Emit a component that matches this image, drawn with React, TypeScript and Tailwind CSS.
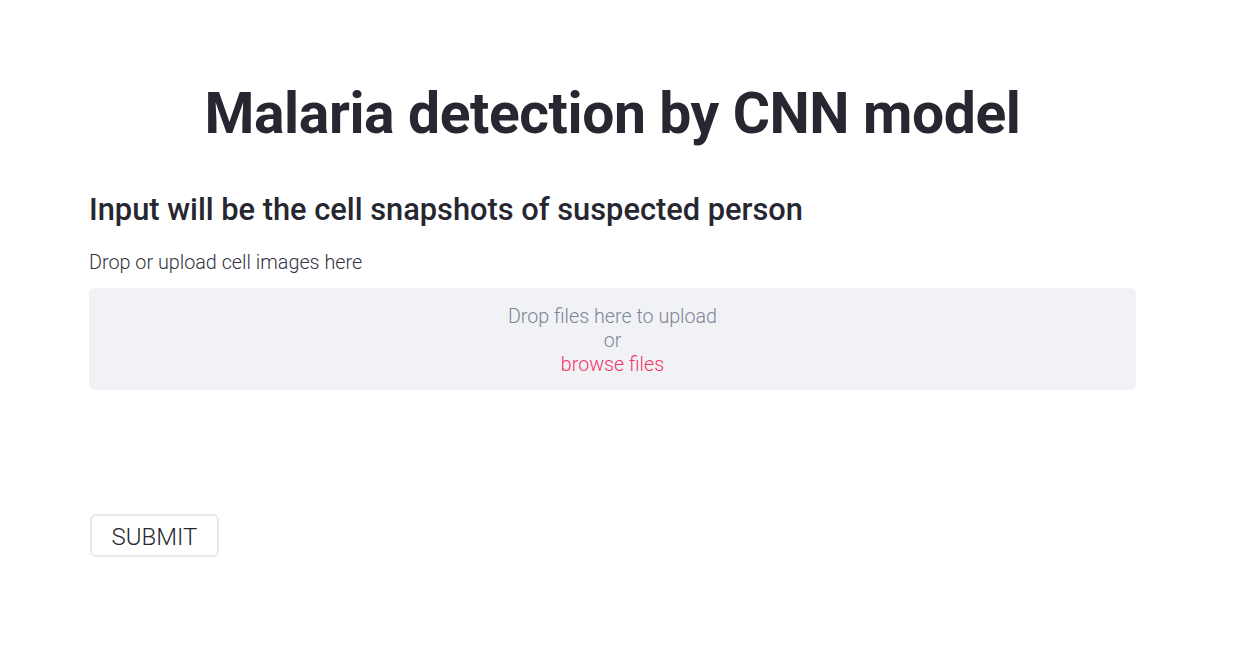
import React from 'react';

export default function App() {
  return (
    <main className="min-h-screen bg-white text-[#262730]" style={{ fontFamily: 'Roboto, "Noto Sans", sans-serif' }}>
      <div className="w-[1047px] ml-[89px] pt-[78px]">
        <h1 className="text-center text-[57px] font-bold leading-[72px] tracking-[-0.4px]">Malaria detection by CNN model</h1>
        <h3 className="mt-[40px] text-[30.8px] font-medium leading-[40px]">Input will be the cell snapshots of suspected person</h3>
        <label className="block mt-[21px] text-[19.8px] font-light leading-[24px] text-[#31333f]">Drop or upload cell images here</label>
        <div className="mt-[13px] h-[102px] rounded-md bg-[#f0f2f6] flex flex-col items-center justify-center pt-[3px] text-[19.7px] font-light leading-[24px] text-[#808495]">
          <span>Drop files here to upload</span>
          <span>or</span>
          <span className="text-[#f63366]">browse files</span>
        </div>
        <button className="mt-[124px] ml-px h-[43px] w-[129px] rounded-md border-2 border-[#e6e9ef] bg-white pt-[3px] text-[24px] font-light text-[#262730]">SUBMIT</button>
      </div>
    </main>
  );
}
